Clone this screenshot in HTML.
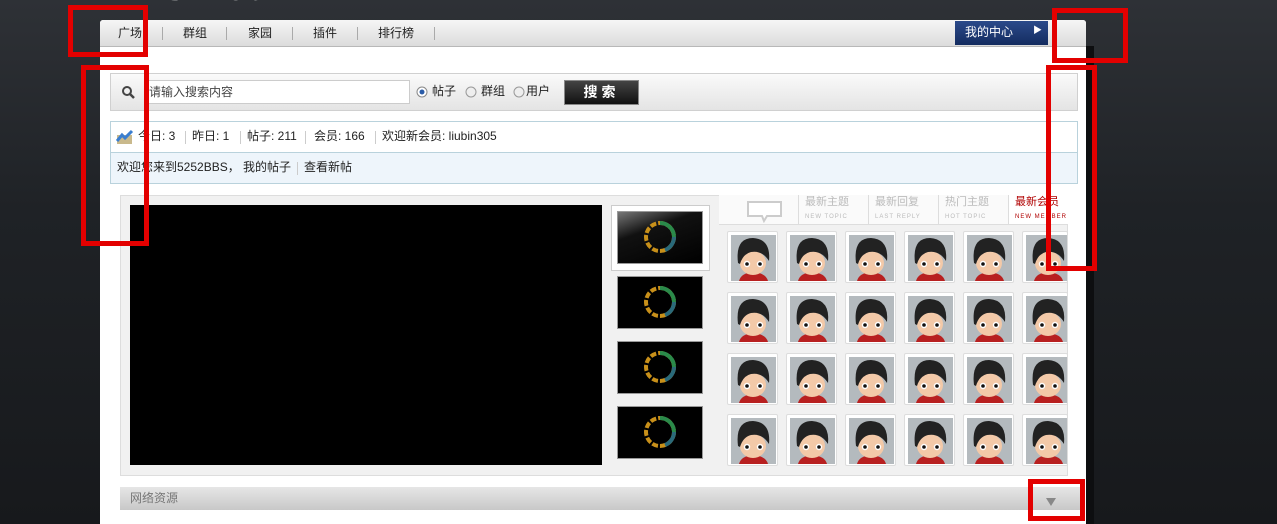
<!DOCTYPE html>
<html><head><meta charset="utf-8"><style>
*{margin:0;padding:0;box-sizing:border-box}
body{width:1277px;height:524px;overflow:hidden;background:linear-gradient(180deg,#2e3136 0%,#1f2226 40%,#17191c 100%);font-family:"Liberation Sans","Noto Sans CJK SC",sans-serif;font-size:12px;color:#333;position:relative;line-height:1.2}
.abs{position:absolute}
.title{left:110px;top:-30px;color:#e8e8e8;font:bold 34px "Liberation Sans",sans-serif;letter-spacing:2px}
.shadow{left:1086px;top:46px;width:8px;height:478px;background:#0d0e10}
.panel{left:100px;top:20px;width:986px;height:504px;background:#fff;border-radius:3px 3px 0 0}
.nav{left:100px;top:20px;width:986px;height:27px;background:linear-gradient(#f6f6f6,#dcdcdc);border-bottom:1px solid #b8b8b8;border-radius:3px 3px 0 0}
.nav span{position:absolute;top:6px;font-size:12px;color:#222}
.nav i{position:absolute;top:7px;width:1px;height:13px;background:#aaa}
.my{left:955px;top:21px;width:93px;height:24px;background:linear-gradient(#2b4a8a,#142c60);color:#fff;font-size:12px;padding:4px 0 0 10px}
.search{left:110px;top:73px;width:968px;height:38px;background:linear-gradient(#fafafa,#e4e4e4);border:1px solid #d0d0d0}
.inp{left:145px;top:80px;width:265px;height:24px;background:#fff;border:1px solid #ccc;padding:4px 0 0 3px;color:#444}
.btn{left:564px;top:80px;width:75px;height:25px;background:linear-gradient(#444,#111);border:1px solid #888;color:#fff;font-weight:bold;font-size:14px;text-align:center;line-height:22px;letter-spacing:4px}
.stats{left:110px;top:121px;width:968px;height:63px;border:1px solid #b9d2dc}
.row2{left:111px;top:152px;width:966px;height:31px;background:#eef5fb;border-top:1px solid #b9d2dc}
.content{left:120px;top:195px;width:948px;height:281px;background:#f1f1f1;border:1px solid #ddd}
.video{left:130px;top:205px;width:472px;height:260px;background:#000}
.th{position:absolute;left:617px;width:86px;height:53px;background:#000;border:1px solid #999}
.tabs{left:719px;top:195px;width:349px;height:30px;background:#fafafa;border-bottom:1px solid #ddd}
.tab{position:absolute;top:0;height:29px;border-left:1px solid #ddd;padding:1px 0 0 6px;color:#bbb;font-size:11px;line-height:13px}
.tab small{display:block;font-size:6px;letter-spacing:1px;margin-top:2px}
.av{position:absolute;width:51px;height:52px;background:#fff;border:1px solid #ddd;border-radius:2px;padding:3px}
.bot{left:120px;top:487px;width:964px;height:23px;background:linear-gradient(#e6e6e6,#c8c8c8);color:#777;padding:4px 0 0 10px}
.red{position:absolute;border:5px solid #e30000}
.lbl{position:absolute;font-size:12px;color:#222}
.sep{position:absolute;width:1px;height:13px;background:#ccc}
</style></head><body>
<div class="abs title">BBS Hot</div>
<div class="abs shadow"></div>
<div class="abs panel"></div>
<div class="abs nav">
<span style="left:18px">广场</span><i style="left:62px"></i>
<span style="left:83px">群组</span><i style="left:126px"></i>
<span style="left:148px">家园</span><i style="left:192px"></i>
<span style="left:213px">插件</span><i style="left:257px"></i>
<span style="left:278px">排行榜</span><i style="left:334px"></i>
</div>
<div class="abs my">我的中心<span style="position:absolute;left:78px;top:4px;font-size:9px">▶</span></div>
<div class="abs search"></div>
<svg class="abs" style="left:121px;top:85px" width="14" height="14"><circle cx="6" cy="6" r="4" fill="none" stroke="#444" stroke-width="2"/><line x1="9" y1="9" x2="13" y2="13" stroke="#444" stroke-width="2.5"/></svg>
<div class="abs inp">请输入搜索内容</div>
<svg class="abs" style="left:416px;top:86px" width="140" height="14"><circle cx="6" cy="6" r="5" fill="#fff" stroke="#888"/><circle cx="6" cy="6" r="2.5" fill="#2a5ca8"/><circle cx="55" cy="6" r="5" fill="#eee" stroke="#999"/><circle cx="103" cy="6" r="5" fill="#eee" stroke="#999"/></svg>
<div class="lbl" style="left:432px;top:84px">帖子</div>
<div class="lbl" style="left:481px;top:84px">群组</div>
<div class="lbl" style="left:526px;top:84px">用户</div>
<div class="abs btn">搜索</div>
<div class="abs stats"></div>
<div class="abs row2"></div>
<svg class="abs" style="left:116px;top:129px" width="18" height="16"><rect x="1" y="6" width="15" height="9" fill="#c9b98c"/><path d="M1 12 L6 6 L9 9 L16 2" stroke="#3a7ed0" stroke-width="3" fill="none"/></svg>
<div class="lbl" style="left:138px;top:129px">今日: 3</div><div class="sep" style="left:185px;top:131px"></div>
<div class="lbl" style="left:192px;top:129px">昨日: 1</div><div class="sep" style="left:240px;top:131px"></div>
<div class="lbl" style="left:247px;top:129px">帖子: 211</div><div class="sep" style="left:305px;top:131px"></div>
<div class="lbl" style="left:314px;top:129px">会员: 166</div><div class="sep" style="left:375px;top:131px"></div>
<div class="lbl" style="left:382px;top:129px">欢迎新会员: liubin305</div>
<div class="lbl" style="left:117px;top:160px">欢迎您来到5252BBS， 我的帖子</div><div class="sep" style="left:297px;top:162px"></div>
<div class="lbl" style="left:304px;top:160px">查看新帖</div>
<div class="abs content"></div>
<div class="abs video"></div>
<div class="abs" style="left:611px;top:205px;width:99px;height:66px;background:#fff;border:1px solid #ccc"></div>
<div class="th" style="top:211px;background:linear-gradient(160deg,#777 0%,#111 35%,#000 100%)"></div>
<div class="th" style="top:276px"></div>
<div class="th" style="top:341px"></div>
<div class="th" style="top:406px"></div>
<svg class="abs" style="left:617px;top:211px" width="86" height="260">
<g fill="none" stroke-width="4">
<g id="ring"><circle cx="43" cy="26" r="14" stroke="#c8901a" stroke-dasharray="6 2"/><path d="M43 12 A14 14 0 0 1 57 26" stroke="#2a8a4a"/><path d="M57 26 A14 14 0 0 1 48 39" stroke="#2a6a7a"/></g>
<use href="#ring" y="65"/><use href="#ring" y="130"/><use href="#ring" y="195"/></g></svg>
<div class="abs tabs">
<svg style="position:absolute;left:28px;top:6px" width="36" height="22"><path d="M1 1 H34 V15 H20 L17 20 L15 15 H1 Z" fill="#fff" stroke="#ccc" stroke-width="2"/></svg>
<div class="tab" style="left:79px;width:70px">最新主题<small>NEW TOPIC</small></div>
<div class="tab" style="left:149px;width:70px">最新回复<small>LAST REPLY</small></div>
<div class="tab" style="left:219px;width:70px">热门主题<small>HOT TOPIC</small></div>
<div class="tab" style="left:289px;width:60px;color:#b00000;background:#fff;overflow:hidden;white-space:nowrap">最新会员<small>NEW MEMBER</small></div>
</div>
<svg width="0" height="0" style="position:absolute"><defs><symbol id="a" viewBox="0 0 45 46"><rect width="45" height="46" fill="#b4babe"/><path d="M8 46 Q10 38 22 37 Q35 38 37 46Z" fill="#b82020"/><ellipse cx="22" cy="28" rx="13" ry="12" fill="#f3c9a8"/><path d="M7 28 Q4 3 22 3 Q40 4 38 26 Q31 15 20 17 Q12 19 9 29Z" fill="#222"/><circle cx="16" cy="29" r="3.2" fill="#fff"/><circle cx="29" cy="29" r="3.2" fill="#fff"/><circle cx="16" cy="29" r="1.8" fill="#111"/><circle cx="29" cy="29" r="1.8" fill="#111"/></symbol></defs></svg>
<div id="avs"></div>
<script>
var h='';var xs=[727,786,845,904,963,1022],ys=[231,292,353,414];
ys.forEach(function(y){xs.forEach(function(x){var w=x==1022?46:51;h+='<div class="av" style="left:'+x+'px;top:'+y+'px;width:'+w+'px;overflow:hidden"><svg width="45" height="46"><use href="#a"/></svg></div>';});});
document.getElementById('avs').innerHTML=h;
</script>
<div class="abs bot">网络资源</div>
<div class="abs" style="left:1046px;top:498px;width:0;height:0;border-left:5px solid transparent;border-right:5px solid transparent;border-top:8px solid #888"></div>
<div class="red" style="left:68px;top:5px;width:80px;height:52px"></div>
<div class="red" style="left:1052px;top:8px;width:76px;height:55px"></div>
<div class="red" style="left:81px;top:65px;width:68px;height:181px"></div>
<div class="red" style="left:1046px;top:65px;width:51px;height:206px"></div>
<div class="red" style="left:1028px;top:479px;width:57px;height:42px"></div>
</body></html>
